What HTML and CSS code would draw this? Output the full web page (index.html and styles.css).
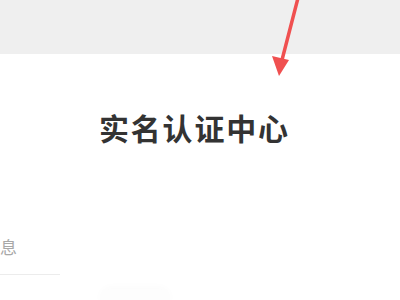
FILE: index.html
```html
<!DOCTYPE html>
<html lang="zh-CN">
<head>
   <meta charset="UTF-8">
   <meta name="viewport" content="width=device-width, initial-scale=1.0">
   <title>实名认证中心</title>
   <link rel="stylesheet" href="styles.css">
</head>
<body>
   <div class="top-bar"></div>

   <div class="page">
       <h1 class="title">实名认证中心</h1>

       <div class="field">
           <span class="field-label">息</span>
       </div>

       <div class="submit-shadow"></div>
   </div>

   <!-- annotation arrow pointing at the page -->
   <svg class="arrow" width="400" height="90" viewBox="0 0 400 90">
       <line x1="298" y1="-2" x2="282" y2="60" stroke="#f05050" stroke-width="3.5" stroke-linecap="round"/>
       <polygon points="272,56 289,60 279,76" fill="#f05050"/>
   </svg>
</body>
</html>
```

FILE: styles.css
```css
* {
    margin: 0;
    padding: 0;
    box-sizing: border-box;
}

body {
    font-family: "Noto Sans CJK SC", "Noto Sans", sans-serif;
    background: #ffffff;
    width: 400px;
    height: 300px;
    overflow: hidden;
    position: relative;
}

.top-bar {
    height: 54px;
    background: #efefef;
}

.page {
    padding-top: 52px;
}

.title {
    font-size: 30px;
    font-weight: 700;
    color: #333333;
    line-height: 42px;
    padding-left: 99px;
    letter-spacing: 1.8px;
}

.field {
    margin-top: 84px;
    width: 60px;
    height: 43px;
    border-bottom: 1px solid #ececec;
    overflow: hidden;
}

.field-label {
    display: block;
    font-size: 17px;
    color: #a8a8a8;
    line-height: 24px;
    margin-top: 3px;
    white-space: nowrap;
}

.submit-shadow {
    margin: 14px 0 0 100px;
    width: 70px;
    height: 20px;
    border-radius: 10px;
    background: #fdfdfd;
    box-shadow: 0 -2px 8px rgba(0, 0, 0, 0.02);
}

.arrow {
    position: absolute;
    left: 0;
    top: 0;
}
```
